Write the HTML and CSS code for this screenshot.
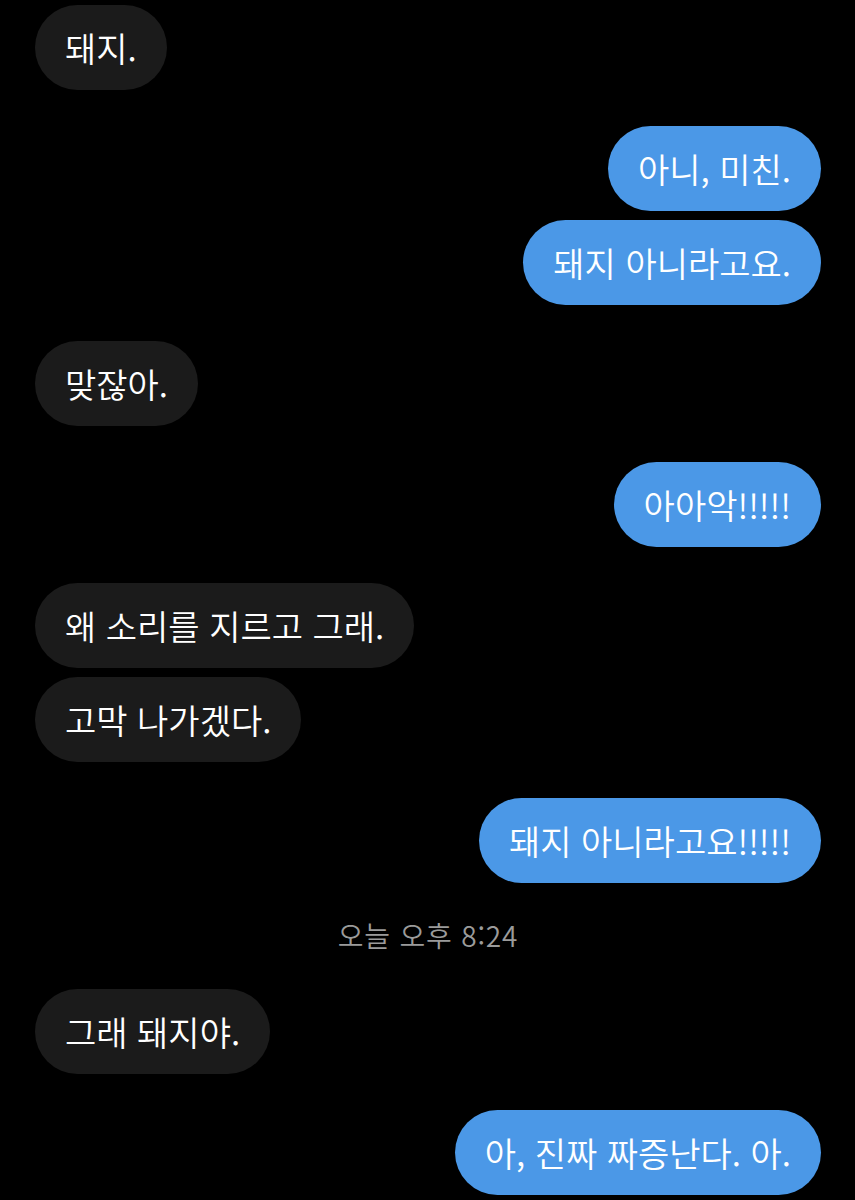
FILE: index.html
```html
<!DOCTYPE html>
<html lang="ko">
<head>
    <meta charset="UTF-8">
    <title>메시지</title>
    <link rel="stylesheet" href="styles.css">
</head>
<body>
    <div class="chat">
        <div class="group in">
            <div class="bubble">돼지.</div>
        </div>
        <div class="group out">
            <div class="bubble">아니, 미친.</div>
            <div class="bubble">돼지 아니라고요.</div>
        </div>
        <div class="group in">
            <div class="bubble">맞잖아.</div>
        </div>
        <div class="group out">
            <div class="bubble">아아악!!!!!</div>
        </div>
        <div class="group in">
            <div class="bubble">왜 소리를 지르고 그래.</div>
            <div class="bubble">고막 나가겠다.</div>
        </div>
        <div class="group out">
            <div class="bubble">돼지 아니라고요!!!!!</div>
        </div>
        <div class="time">오늘 오후 8:24</div>
        <div class="group in">
            <div class="bubble">그래 돼지야.</div>
        </div>
        <div class="group out">
            <div class="bubble">아, 진짜 짜증난다. 아.</div>
        </div>
    </div>
</body>
</html>
```
FILE: styles.css
```css
body {
    margin: 0;
    background-color: #000;
    font-family: "Noto Sans CJK KR", "Noto Sans", sans-serif;
    color: #fff;
}
.chat {
    padding: 5px 34px 0 35px;
    display: flex;
    flex-direction: column;
}
.group {
    display: flex;
    flex-direction: column;
    gap: 9px;
    margin-bottom: 36px;
}
.group.in {
    align-items: flex-start;
}
.group.out {
    align-items: flex-end;
}
.bubble {
    height: 85px;
    box-sizing: border-box;
    padding: 0 30px 0 30px;
    border-radius: 43px;
    display: flex;
    align-items: center;
    font-size: 34px;
    font-weight: 350;
    white-space: nowrap;
}
.in .bubble {
    background-color: #1b1b1b;
}
.out .bubble {
    background-color: #4b98e7;
}
.time {
    text-align: center;
    color: #9b9b9b;
    font-size: 28px;
    font-weight: 350;
    letter-spacing: 0.8px;
    line-height: 36px;
    margin: -2px 0 36px;
}
```
